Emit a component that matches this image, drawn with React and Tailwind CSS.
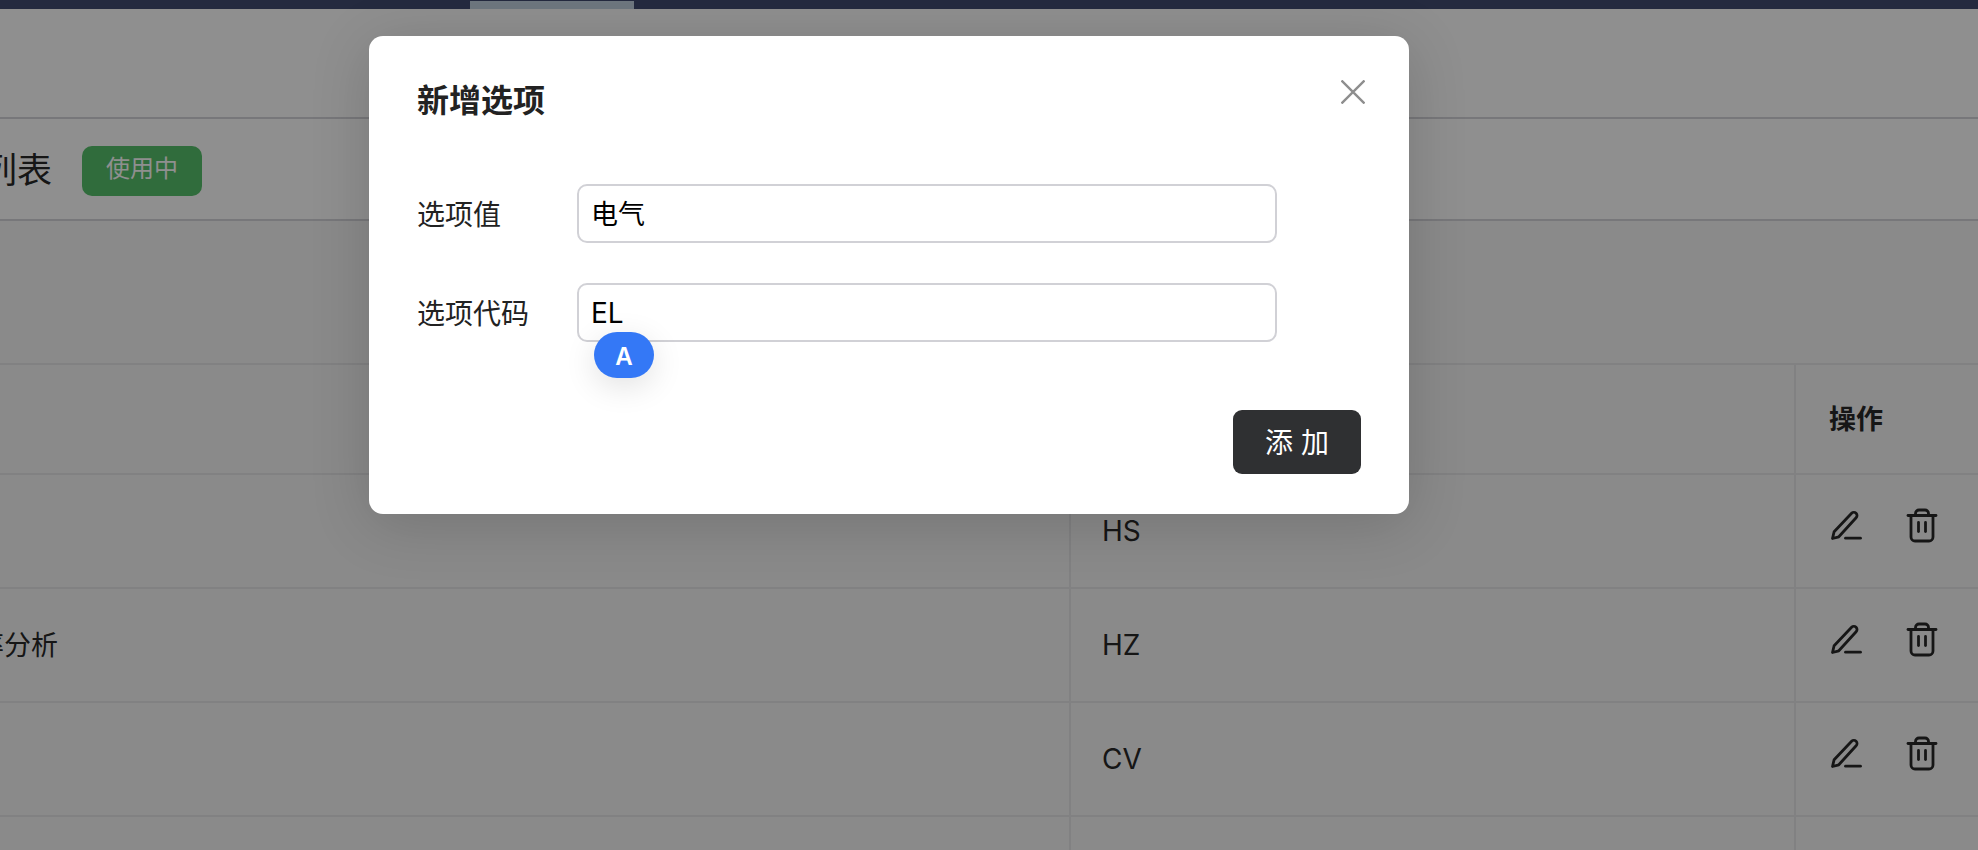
import React from "react";

const fontStack = { fontFamily: '"Inter", "Noto Sans CJK SC", sans-serif' };

const PencilIcon = () => (
  <svg viewBox="0 0 36 36" className="h-9 w-9" fill="none" stroke="#282828" strokeWidth="2.8" strokeLinecap="round" strokeLinejoin="round">
    <path d="M4.5 31.5l1.6-6.8L23.6 6.2a3.2 3.2 0 0 1 4.5 0a3.2 3.2 0 0 1 0 4.5L10.8 29.8z" />
    <path d="M17.5 31.2h15" />
  </svg>
);

const TrashIcon = () => (
  <svg viewBox="0 0 36 36" className="h-9 w-9" fill="none" stroke="#282828" strokeWidth="2.8" strokeLinecap="round" strokeLinejoin="round">
    <path d="M4 8.5h28" />
    <path d="M11.5 8V6.5A3.5 3.5 0 0 1 15 3h6a3.5 3.5 0 0 1 3.5 3.5V8" />
    <path d="M7 9v21a4 4 0 0 0 4 4h14a4 4 0 0 0 4-4V9" />
    <path d="M14.5 15.5v9" />
    <path d="M21.5 15.5v9" />
  </svg>
);

const rows = [
  { name: "", code: "HS" },
  { name: "频率分析", code: "HZ" },
  { name: "", code: "CV" },
  { name: "", code: "" },
];

const Row = ({ name, code, last }) => (
  <div className={`grid grid-cols-[1071px_725px_1fr] ${last ? "h-[34px]" : "h-[114px] border-b-2 border-[#e6e6e8]"}`}>
    <div className="flex items-center justify-end overflow-hidden pr-[1011px] pt-[2px] text-[27px] text-[#282828] border-r-2 border-[#e6e6e8]">
      <span className="shrink-0 whitespace-nowrap">{name}</span>
    </div>
    <div className="flex items-center pl-[31px] text-[28px] text-[#282828] border-r-2 border-[#e6e6e8]">{code}</div>
    {!last && (
      <div className="flex items-center gap-[40px] pl-[32px] pb-[12px]">
        <PencilIcon />
        <TrashIcon />
      </div>
    )}
  </div>
);

export default function App() {
  return (
    <div className="relative h-[850px] w-[1978px] overflow-hidden bg-white" style={fontStack}>
      {/* Page behind the dialog */}
      <div className="flex h-[9px] bg-[#404c71]">
        <div className="ml-[470px] mt-px w-[164px] bg-[#c4d4e2]" />
      </div>
      <div className="h-[110px] border-b-2 border-[#d5d5da]" />
      <div className="flex h-[102px] items-center border-b-2 border-[#d5d5da] pt-[3px]">
        <span className="-ml-[18px] text-[35px] leading-none text-[#282828]">列表</span>
        <span className="ml-[30px] flex h-[50px] w-[120px] items-center justify-center rounded-[10px] bg-[#56c06b] pb-[3px] text-[24px] text-white">
          使用中
        </span>
      </div>
      <div className="h-[144px] border-b-2 border-[#e6e6e8] bg-[#f7f7f7]" />
      <div className="grid h-[110px] grid-cols-[1071px_725px_1fr] border-b-2 border-[#e6e6e8] bg-[#f7f7f7]">
        <div className="border-r-2 border-[#e6e6e8]" />
        <div className="border-r-2 border-[#e6e6e8]" />
        <div className="flex items-center pl-[33px] pt-[2px] text-[27px] font-bold text-[#282828]">操作</div>
      </div>
      <div className="bg-[#f7f7f7]">
        {rows.map((row, i) => (
          <Row key={i} name={row.name} code={row.code} last={i === rows.length - 1} />
        ))}
      </div>

      {/* Overlay */}
      <div className="absolute inset-0 bg-black/[0.44]" />

      {/* Dialog */}
      <div className="absolute left-[369px] top-[36px] w-[1040px] rounded-[14px] bg-white pl-[48px] pr-[48px] pb-[40px] pt-[42px] shadow-[0_10px_60px_rgba(0,0,0,0.16)]">
        <h2 className="h-[45px] text-[32px] font-bold leading-[45px] text-[#222222]">新增选项</h2>
        <button className="absolute right-[44px] top-[44px] text-[#8e8e8e]">
          <svg viewBox="0 0 24 24" className="h-6 w-6" fill="none" stroke="currentColor" strokeWidth="2.4">
            <path d="M0.5 0.5L23.5 23.5M23.5 0.5L0.5 23.5" />
          </svg>
        </button>

        <div className="mt-[61px] flex items-center">
          <label className="w-[160px] pt-[2px] text-[28px] text-[#222222]">选项值</label>
          <input
            readOnly
            value="电气"
            className="h-[59px] w-[700px] rounded-[10px] border-2 border-[#d1d1d6] pl-[12px] pb-[2px] text-[27px] text-black outline-none"
          />
        </div>
        <div className="relative mt-[40px] flex items-center">
          <label className="w-[160px] pt-[2px] text-[28px] text-[#222222]">选项代码</label>
          <input
            readOnly
            value="EL"
            className="h-[59px] w-[700px] rounded-[10px] border-2 border-[#d1d1d6] pl-[12px] text-[28px] text-black outline-none"
          />
          <div className="absolute left-[177px] top-[49px] flex h-[46px] w-[60px] items-center justify-center rounded-full bg-[#3478f6] pt-[3px] text-[24px] font-semibold text-white shadow-[0_8px_32px_rgba(0,0,0,0.12)]">
            A
          </div>
        </div>
        <div className="mt-[68px] flex justify-end">
          <button className="h-[64px] w-[128px] rounded-[9px] bg-[#2f3032] pt-[2px] text-[28px] text-white">添 加</button>
        </div>
      </div>
    </div>
  );
}
